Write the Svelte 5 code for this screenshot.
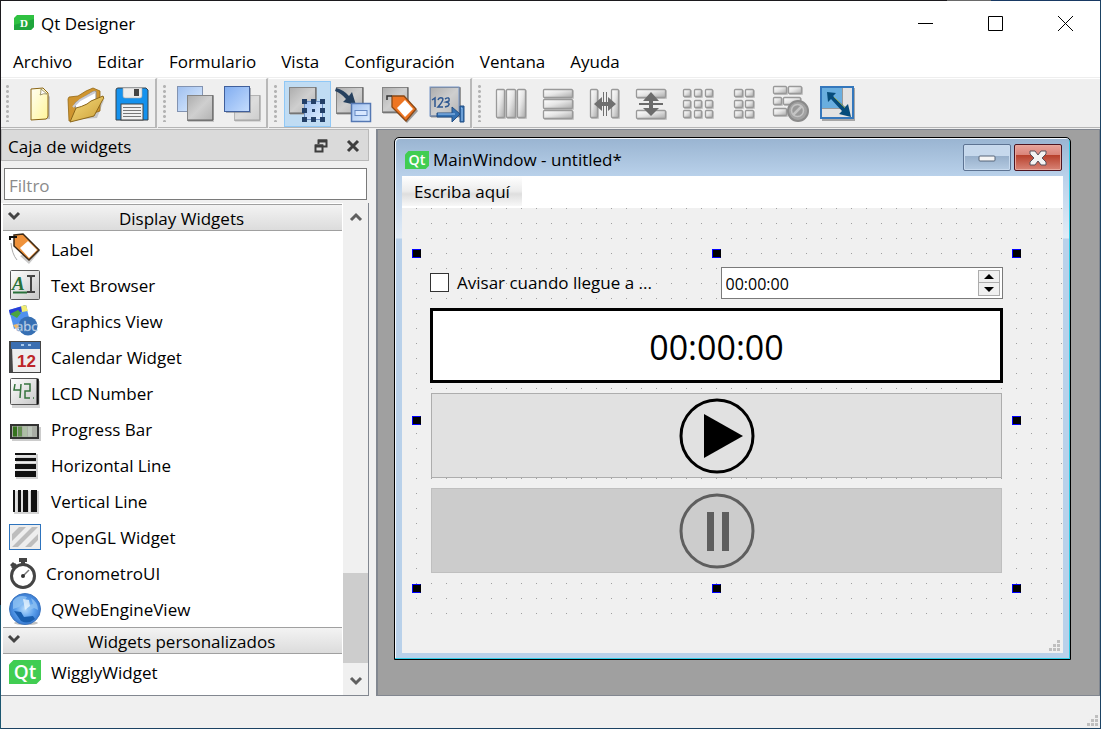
<script>
  const menus = ['Archivo', 'Editar', 'Formulario', 'Vista', 'Configuración', 'Ventana', 'Ayuda'];

  const toolbars = [
    [
      { icon: 'new', label: 'Nuevo' },
      { icon: 'open', label: 'Abrir' },
      { icon: 'save', label: 'Guardar' },
    ],
    [
      { icon: 'lower', label: 'Enviar atrás' },
      { icon: 'raise', label: 'Traer al frente' },
    ],
    [
      { icon: 'edit-widgets', label: 'Editar widgets', active: true },
      { icon: 'edit-signals', label: 'Editar señales y slots' },
      { icon: 'edit-buddies', label: 'Editar compañeros' },
      { icon: 'edit-tabs', label: 'Editar orden de tabulación' },
    ],
    [
      { icon: 'lay-h', label: 'Distribuir horizontalmente' },
      { icon: 'lay-v', label: 'Distribuir verticalmente' },
      { icon: 'split-h', label: 'Divisor horizontal' },
      { icon: 'split-v', label: 'Divisor vertical' },
      { icon: 'grid', label: 'Distribuir en rejilla' },
      { icon: 'form', label: 'Distribuir en formulario' },
      { icon: 'break', label: 'Romper distribución' },
      { icon: 'adjust', label: 'Ajustar tamaño' },
    ],
  ];

  const displayWidgets = [
    { icon: 'label', name: 'Label' },
    { icon: 'text', name: 'Text Browser' },
    { icon: 'graphics', name: 'Graphics View' },
    { icon: 'calendar', name: 'Calendar Widget' },
    { icon: 'lcd', name: 'LCD Number' },
    { icon: 'progress', name: 'Progress Bar' },
    { icon: 'hline', name: 'Horizontal Line' },
    { icon: 'vline', name: 'Vertical Line' },
    { icon: 'opengl', name: 'OpenGL Widget' },
    { icon: 'chrono', name: 'CronometroUI', narrow: true },
    { icon: 'web', name: 'QWebEngineView' },
  ];
  const groups = [
    { title: 'Display Widgets', items: displayWidgets },
    { title: 'Widgets personalizados', items: [{ icon: 'qt', name: 'WigglyWidget' }] },
  ];

  const handles = ['nw', 'n', 'ne', 'w', 'e', 'sw', 's', 'se'];

  let filter = $state('');
  let time = $state('00:00:00');
  let warn = $state(false);
</script>

{#snippet cell(x, y, w, h)}
  <rect x={x + 1} y={y + 1} width={w} height={h} rx="1" fill="#c4c4c4" />
  <rect x={x + 0.5} y={y + 0.5} width={w - 1} height={h - 1} rx="1" fill="url(#g-cell)" stroke="#999" stroke-width="1.300" />
{/snippet}

{#snippet pane(x, y, s)}
  <rect x={x + 1} y={y + 1} width={s} height={s} fill="#999" opacity=".5" />
  <rect x={x + 0.5} y={y + 0.5} width={s - 1} height={s - 1} fill="url(#g-pane)" stroke="#858585" />
  <path d="M{x + 1} {y + s - 1}h{s - 1}v-{s - 1}" fill="none" stroke="#666" />
{/snippet}

{#snippet qtlogo()}
  <path d="M4.500 4H32V23.500L27.500 28H0V8.500z" fill="#41cd52" />
  <text x="16" y="22.500" text-anchor="middle" font-size="19" font-weight="600" fill="#fff">Qt</text>
{/snippet}

{#snippet icon(name)}
  <svg class="icon" viewBox="0 0 32 32" aria-hidden="true">
    {#if name === 'new'}
      <path d="M8 32l19-1V9l-3-4z" fill="#777" opacity=".4" />
      <path d="M8 1l12-1 5 5v23q0 2-2 3L8 32z" fill="url(#g-paper)" stroke="#8a6414" />
      <path d="M18 1q0 5-1 6 4-2 7-1z" fill="#fff" stroke="#8b8056" stroke-width=".8" />
    {:else if name === 'open'}
      <path d="M2 32l26-2 7-18z" fill="#777" opacity=".35" />
      <path d="M-1 11l1-2 9-1 8-5 7-3 7 3v20L0 33z" fill="#cf9530" stroke="#946711" stroke-width=".8" />
      <path d="M6 15l6-4 11-7 4-1v11L7 25z" fill="#fff" stroke="#8c8c8c" />
      <path d="M4 19l7-7 15-8" fill="none" stroke="#c9cbd5" stroke-width="2" />
      <path d="M7 20q5-1 11-4l4-3 12-5q2 2-1 5L25 28 1 34z" fill="url(#g-folder)" stroke="#8b6518" />
    {:else if name === 'save'}
      <path d="M2 0h28l2 2v30H0V2q0-2 2-2z" fill="#1592ee" stroke="#3b4249" />
      <path d="M7 0h19v8q0 2-2 2H9q-2 0-2-2z" fill="#ececec" stroke="#aaa" stroke-width=".6" />
      <rect x="18" y="1" width="5" height="7" fill="#444" />
      <rect x="5" y="16" width="22" height="16" fill="#f1f1f1" stroke="#444" />
      <path d="M7 19.500h18M7 22.500h18M7 25.500h18M7 28.500h18" stroke="#777" />
    {:else if name === 'lower'}
      <rect x="-2.500" y="-1.500" width="25" height="25" fill="url(#g-sky)" stroke="#8293b1" />
      {@render pane(7, 7, 26)}
    {:else if name === 'raise'}
      <g opacity=".55">{@render pane(7, 7, 26)}</g>
      <rect x="-1" y="0" width="25" height="25" fill="#7b818b" opacity=".6" />
      <rect x="-2.500" y="-1.500" width="25" height="25" fill="url(#g-blue)" stroke="#405f9b" />
    {:else if name === 'edit-widgets'}
      {@render pane(-2, -1, 27)}
      <rect x="13.500" y="13.500" width="18" height="18" fill="url(#g-sky)" stroke="#6e90c4" />
      <path d="M11 11h5v5h-5zM20 11h5v5h-5zM29 11h5v5h-5zM11 20h5v5h-5zM29 20h5v5h-5zM11 29h5v5h-5zM20 29h5v5h-5zM29 29h5v5h-5zM21 21h3v3h-3z" fill="#233f67" />
    {:else if name === 'edit-signals'}
      {@render pane(-2, -1, 27)}
      <path d="M-2 0q8 2 13 8l3-4 4 13-13-3 3-3Q3 5-3 3z" fill="#26405e" />
      <rect x="13.500" y="15.500" width="19" height="18" fill="url(#g-sky)" stroke="#5578b3" stroke-width="1.500" />
      <rect x="17" y="22.500" width="12" height="5" fill="#d7e7ff" stroke="#678ac3" />
    {:else if name === 'edit-buddies'}
      {@render pane(-2, -1, 26)}
      <path d="M12 24L23 35 34 23 30 18z" fill="#444" opacity=".5" />
      <path d="M8 8h12l12 13-10 12L8 19z" fill="#ee7522" stroke="#8a4815" stroke-width="1.300" />
      <path d="M13 20l8-8 8 9-8 8z" fill="#fff" />
      <path d="M3 12V8h5" fill="none" stroke="#333" stroke-width="1.500" />
    {:else if name === 'edit-tabs'}
      {@render pane(-1, -1, 30)}
      <rect x="-1" y="-1" width="29" height="29" fill="none" stroke="#7696c8" />
      <path d="M1 12l3-2v9M7 12q1-3 4-2t-4 9h5M14 11q5-3 4 2l-3 1q5 1 2 4l-3 1" stroke="#2e5790" stroke-width="1.500" fill="none" />
      <path d="M6 25h15v-6l8 7-8 8v-5H6zM29 18h4v16h-4z" fill="#3471b2" stroke="#234f83" />
      <path d="M7 26h17M30 20h1v13" stroke="#a2cdfa" fill="none" />
    {:else if name === 'lay-h'}
      {@render cell(1, 1, 9, 29)}{@render cell(11, 1, 10, 29)}{@render cell(22, 1, 9, 29)}
    {:else if name === 'lay-v'}
      {@render cell(1, 1, 30, 9)}{@render cell(1, 11, 30, 10)}{@render cell(1, 22, 30, 9)}
    {:else if name === 'split-h'}
      {@render cell(1, 1, 8, 29)}{@render cell(22, 1, 8, 29)}
      <path d="M5 16l8-7v5h1V4h1v10h2V4h1v10h1V9l8 7-8 7v-5h-1v10h-1V18h-2v10h-1V18h-1v5z" fill="#707070" />
    {:else if name === 'split-v'}
      {@render cell(1, 1, 30, 9)}{@render cell(1, 22, 30, 9)}
      <path d="M16 4l8 9h-6v2h10v2H18v3h6l-8 8-8-8h6v-3H4v-2h10v-2H8z" fill="#6c6c6c" />
    {:else if name === 'grid'}
      {#each [1, 12, 22] as y}{#each [1, 12, 23] as x}{@render cell(x, y, 8, 8)}{/each}{/each}
    {:else if name === 'form'}
      {#each [1, 12, 22] as y}{#each [6, 17] as x}{@render cell(x, y, 9, 8)}{/each}{/each}
    {:else if name === 'break'}
      {@render cell(-2, -2, 14, 8)}{@render cell(13, -2, 14, 8)}{@render cell(-2, 9, 9, 8)}{@render cell(8, 9, 18, 8)}{@render cell(-2, 20, 14, 8)}
      <circle cx="23" cy="23" r="10" fill="#a3a3a3" stroke="#8a8a8a" stroke-width="2" />
      <circle cx="22.500" cy="22.500" r="6" fill="#999" stroke="#c4c4c4" stroke-width="1.500" />
      <path d="M18 27l9-9" stroke="#c4c4c4" stroke-width="2.500" />
    {:else if name === 'adjust'}
      <rect x="0" y="0" width="33" height="33" fill="#888" opacity=".7" />
      <rect x="-1" y="-1" width="32" height="31" fill="#e2e2e2" stroke="#3477bc" stroke-width="2" />
      <rect x="0" y="0" width="20" height="20" fill="#69aedf" />
      <path d="M0 20.500h20.500V0" fill="none" stroke="#999" />
      <path d="M5 4l9 1-3 3 12 11 3-3 3 13-12-3 3-3L9 11l-3 3z" fill="#064c7b" />
      <path d="M12 9l11 11" stroke="#a8b94a" stroke-width=".8" />
    {:else if name === 'label'}
      <path d="M11 23L20 31l11-13-3-4z" fill="#777" opacity=".4" />
      <path d="M5 2L14 1l16 16-10 10L5 13z" fill="#ef923b" stroke="#3c2a17" stroke-width="1.500" />
      <path d="M11 15l8-7 9 9-8 8z" fill="#fff" />
      <path d="M1 7V4h7" fill="none" stroke="#111" stroke-width="2" />
      <path d="M2 10q1 11 6 17" fill="none" stroke="#aaa" />
    {:else if name === 'text'}
      <rect x="1.500" y="1.500" width="29" height="29" rx="1" fill="url(#g-tile)" stroke="#555" />
      <text x="3" y="21" font-size="19" font-style="italic" font-weight="600" fill="#28713a" class="serif">A</text>
      <path d="M4 23.500h14" stroke="#28713a" stroke-width="2" />
      <path d="M18 7h3l1 1 1-1h3M22 8v14M18 23h3l1-1 1 1h3" stroke="#444" stroke-width="2" fill="none" />
    {:else if name === 'graphics'}
      <path d="M0 5l17-5 4 17-16 7z" fill="#5091ed" />
      <path d="M0 5l17-5 1 5L1 10z" fill="#293fd8" />
      <path d="M12 1l5-1 2 6-6 1z" fill="#f1ed75" />
      <path d="M1 9l8-4 3 3-4 5z" fill="#4ba53e" />
      <path d="M4 20l8-2 2 5-7 1z" fill="#edbb66" />
      <circle cx="19" cy="21" r="9.500" fill="#366fb3" />
      <text x="7" y="26" font-size="13" fill="#eff7ff" stroke="#83a6cf" stroke-width=".5">abc</text>
    {:else if name === 'calendar'}
      <path d="M0 0h32v32H0z" fill="#454545" />
      <path d="M3 6h28v25H4z" fill="#eee" />
      <path d="M2 1h29v7H2z" fill="#3c6fb1" />
      <path d="M12 4h3M19 4h3" stroke="#a5c7eb" stroke-width="2" />
      <text x="17.500" y="26" text-anchor="middle" font-size="17" font-weight="700" fill="#bd2528" class="arial">12</text>
    {:else if name === 'lcd'}
      <rect x="3" y="4" width="28" height="27" fill="#888" opacity=".35" />
      <rect x="1.500" y="1.500" width="28" height="26" rx="1" fill="url(#g-tile)" stroke="#555" />
      <path d="M28.500 2v25.500" stroke="#111" stroke-width="2" />
      <path d="M6 7l-1 6h7M12 7l-1 14M15 7h6v7h-5v7h5M24 21h1" fill="none" stroke="#35733d" stroke-width="1.500" />
    {:else if name === 'progress'}
      <rect x="3" y="14" width="29" height="14" fill="#999" opacity=".5" />
      <rect x="2" y="12" width="27" height="13" fill="#a9ada5" stroke="#333" stroke-width="2" />
      <path d="M4 13.500h4v10H4z" fill="#35721e" /><path d="M9 13.500h4v10H9z" fill="#649051" /><path d="M14 13.500h4v10h-4z" fill="#adbea5" /><path d="M19 13.500h4v10h-4z" fill="#bdc7bb" />
    {:else if name === 'hline'}
      <path d="M7 5h22v25H7z" fill="#b6b6b6" opacity=".6" />
      <path d="M6 4h21v2H6zM6 9h21v3H6zM6 15h21v5H6zM6 22h21v6H6z" fill="#111" />
      <path d="M6 7h21M6 13.500h21M6 21h21" stroke="#eee" />
    {:else if name === 'vline'}
      <path d="M5 6h25v23H5z" fill="#b6b6b6" opacity=".6" />
      <path d="M4 5h2v22H4zM9 5h3v22H9zM14 5h5v22h-5zM22 5h6v22h-6z" fill="#111" />
      <path d="M7 5v22M13 5v22M20.500 5v22" stroke="#eee" />
    {:else if name === 'opengl'}
      <rect x=".500" y="3.500" width="31" height="25" fill="#eee" stroke="#2d73bd" />
      <path d="M3 13l7-7h7L3 20zM3 26l20-20h6L9 26zM16 26l13-13v6l-7 7z" fill="#bdbdbd" />
    {:else if name === 'chrono'}
      <circle cx="14" cy="19" r="11.500" fill="none" stroke="#444" stroke-width="3" />
      <path d="M10 1h8v4h-8zM12 4h4v4h-4zM2 10l4-4 2 2-4 4zM1 8l3-3 2 2-3 3z" fill="#444" />
      <path d="M13 20l7-7" stroke="#777" stroke-width="1.500" /><circle cx="14" cy="19" r="2" fill="#333" />
    {:else if name === 'web'}
      <ellipse cx="17" cy="30" rx="12" ry="2" fill="#999" opacity=".6" />
      <circle cx="16" cy="16" r="15.500" fill="url(#g-globe)" stroke="#3e77c0" />
      <path d="M4 8q5-7 14-4l-3 5-5 5-6 2zM22 5q7 4 7 12l-4-2-6 3-2-5 7-2z" fill="#8fc2f2" opacity=".8" />
      <path d="M5 18l7 1 3 5 9-1 2 3q-7 6-14 2z" fill="#195eae" />
      <path d="M14 6l6 1 1 6-5 4z" fill="#f5fcff" opacity=".7" />
    {:else if name === 'qt'}
      {@render qtlogo()}
    {/if}
  </svg>
{/snippet}

{#snippet chevron(up)}
  <svg class="chev" viewBox="0 0 14 10" aria-hidden="true">
    <path d={up ? 'M2 8l5-5 5 5' : 'M2 2l5 5 5-5'} fill="none" stroke="currentColor" stroke-width="3" />
  </svg>
{/snippet}

<svg class="defs" aria-hidden="true">
  <defs>
    <linearGradient id="g-cell" x2="1" y2="1"><stop stop-color="#fff" /><stop offset=".45" stop-color="#e6e6e6" /><stop offset="1" stop-color="#aaa" /></linearGradient>
    <linearGradient id="g-pane" x2="1" y2="1"><stop stop-color="#adadad" /><stop offset=".5" stop-color="#cfcfcf" /><stop offset="1" stop-color="#b2b2b2" /></linearGradient>
    <linearGradient id="g-sky" x2="1" y2="1"><stop stop-color="#9fbfef" /><stop offset="1" stop-color="#dfeeff" /></linearGradient>
    <linearGradient id="g-blue" x2="1" y2="1"><stop stop-color="#81adf0" /><stop offset="1" stop-color="#c4dcfd" /></linearGradient>
    <linearGradient id="g-paper" x2="1" y2="1"><stop stop-color="#fffef3" /><stop offset="1" stop-color="#fff599" /></linearGradient>
    <linearGradient id="g-folder" x2="1" y2="1"><stop stop-color="#f5dc80" /><stop offset="1" stop-color="#cd9f35" /></linearGradient>
    <linearGradient id="g-tile" x2="1" y2="1"><stop stop-color="#fff" /><stop offset="1" stop-color="#c6c6c6" /></linearGradient>
    <radialGradient id="g-globe"><stop stop-color="#b8dcfb" /><stop offset=".6" stop-color="#5ca0ec" /><stop offset="1" stop-color="#397bd2" /></radialGradient>
  </defs>
</svg>

<div class="window">
  <header class="titlebar">
    <svg class="app-icon" viewBox="0 0 20 15" aria-hidden="true">
      <path d="M3 0h17v12l-3 3H0V3z" fill="#2fc141" /><path d="M0 10L20 4v8l-3 3H0z" fill="#17963a" opacity=".65" />
      <text x="10" y="11.500" text-anchor="middle" font-size="11" font-weight="700" fill="#fff" class="serif">D</text>
    </svg>
    <span class="app-title">Qt Designer</span>
    <button class="sys" aria-label="Minimizar"><svg viewBox="0 0 15 15"><path d="M0 7.500h15" /></svg></button>
    <button class="sys" aria-label="Maximizar"><svg viewBox="0 0 15 15"><path d="M.500 .500h14v14H.500z" /></svg></button>
    <button class="sys" aria-label="Cerrar"><svg viewBox="0 0 15 15"><path d="M0 0l15 15M15 0L0 15" /></svg></button>
  </header>

  <nav class="menubar">
    {#each menus as menu}<button>{menu}</button>{/each}
  </nav>

  <div class="toolbars">
    {#each toolbars as tools}
      <div class="toolbar" role="toolbar">
        <span class="grip"></span>
        <div class="tools">
          {#each tools as tool}
            <button class="tool" class:active={tool.active} aria-label={tool.label}>{@render icon(tool.icon)}</button>
          {/each}
        </div>
      </div>
    {/each}
  </div>

  <main class="workspace">
    <aside class="dock">
      <div class="dock-title">
        <span>Caja de widgets</span>
        <button aria-label="Flotar">
          <svg viewBox="0 0 14 14"><path d="M4.500 5V1.500h8v6H9" /><path d="M4 2h9" stroke-width="3" /><path d="M1.500 6.500h7v6h-7z" /><path d="M1 7h8" stroke-width="3" /></svg>
        </button>
        <button aria-label="Cerrar panel">
          <svg viewBox="0 0 14 14"><path d="M2 2l10 10M12 2L2 12" stroke-width="3" /></svg>
        </button>
      </div>
      <input class="filter" type="text" placeholder="Filtro" aria-label="Filtro" bind:value={filter} />
      <div class="box">
        <div class="list">
          {#each groups as group}
            <button class="group">{@render chevron(false)}<span>{group.title}</span></button>
            <ul>
              {#each group.items as item}
                <li class:narrow={item.narrow}>{@render icon(item.icon)}<span>{item.name}</span></li>
              {/each}
            </ul>
          {/each}
        </div>
        <div class="scrollbar">
          <button aria-label="Subir">{@render chevron(true)}</button>
          <div class="track"><div class="thumb"></div></div>
          <button aria-label="Bajar">{@render chevron(false)}</button>
        </div>
      </div>
    </aside>

    <section class="mdi">
      <div class="sub">
        <div class="sub-title">
          <svg class="qt" viewBox="0 4 32 24" aria-hidden="true">{@render qtlogo()}</svg>
          <span>MainWindow - untitled*</span>
          <button class="cap min" aria-label="Minimizar formulario">
            <svg viewBox="0 0 18 18"><rect x="1" y="7" width="16" height="5" rx="1" fill="#f5f5f5" stroke="#566579" /></svg>
          </button>
          <button class="cap close" aria-label="Cerrar formulario">
            <svg viewBox="0 0 18 18"><path d="M1 2h5l3 4 3-4h5v3l-4 4 4 4v3h-5l-3-4-3 4H1v-3l4-4-4-4z" fill="#f3f3f3" stroke="#59505a" /></svg>
          </button>
        </div>
        <div class="sub-body">
          <div class="form-menu"><button>Escriba aquí</button></div>
          <div class="canvas">
            <div class="layout">
              {#each handles as h}<i class="handle {h}"></i>{/each}
              <div class="row">
                <label><input type="checkbox" bind:checked={warn} />Avisar cuando llegue a ...</label>
                <div class="spin">
                  <input type="text" aria-label="Tiempo de aviso" bind:value={time} />
                  <div class="steps">
                    <button aria-label="Aumentar"><svg viewBox="0 0 10 5"><path d="M5 0l5 5H0z" /></svg></button>
                    <button aria-label="Disminuir"><svg viewBox="0 0 10 5"><path d="M0 0h10L5 5z" /></svg></button>
                  </div>
                </div>
              </div>
              <div class="clock">00:00:00</div>
              <button class="big" aria-label="Iniciar">
                <svg viewBox="0 0 76 76"><circle cx="38" cy="38" r="36" fill="none" stroke="#000" stroke-width="3" /><path d="M25 16l39 22-39 22z" /></svg>
              </button>
              <button class="big" disabled aria-label="Pausar">
                <svg viewBox="0 0 76 76"><circle cx="38" cy="38" r="36" fill="none" stroke="#5e5e5e" stroke-width="3" /><path d="M28 19h7v39h-7zM43 19h7v39h-7z" fill="#5e5e5e" /></svg>
              </button>
            </div>
          </div>
          <div class="form-status"><span class="sizegrip"></span></div>
        </div>
      </div>
    </section>
  </main>

  <footer class="status"><span class="sizegrip"></span></footer>
</div>

<style>
  :global(body) { margin: 0; }
  .defs { position: absolute; width: 0; height: 0; }
  .window, .window * { box-sizing: border-box; }
  .window {
    min-height: 100vh;
    display: flex;
    flex-direction: column;
    padding: 1px;
    background:
      linear-gradient(to right, #1c1a1e 86%, #6a6a6a 86% 90%, #183963 90%) top / 100% 1px no-repeat,
      linear-gradient(to bottom, #1c1a1e 83%, #1b5670 83%) left / 1px 100% no-repeat,
      #1b4263;
    font-family: "Open Sans", "Noto Sans", sans-serif;
    font-size: 17px;
    line-height: 24px;
    color: #000;
  }
  button, input { font: inherit; color: inherit; }
  button { padding: 0; border: 0; background: none; }
  .icon { width: 32px; height: 32px; overflow: visible; flex: none; }
  .serif { font-family: "Liberation Serif", serif; }
  .arial { font-family: "Liberation Sans", sans-serif; }

  .titlebar { display: flex; align-items: center; height: 45px; background: #fff; padding-left: 13px; }
  .app-icon { width: 20px; height: 15px; margin-right: 7px; margin-bottom: 3px; }
  .app-title { flex: 1; }
  .sys { width: 70px; height: 45px; display: grid; place-items: center; }
  .sys svg { width: 15px; height: 15px; fill: none; stroke: #000; }

  .menubar { display: flex; gap: 25px; height: 32px; padding: 0 12px; background: #fff; border-bottom: 1px solid #eee; }
  .toolbars { display: flex; height: 50px; background: #efefef; }
  .toolbar { display: flex; border-right: 2px solid #b8b8b8; border-bottom: 1px solid #b5b5b5; border-top: 1px solid #fff; margin-right: 1px; }
  .toolbar:last-child { flex: 1; border-right: 0; margin-right: 0; }
  .grip { width: 3px; margin: 5px 7px 5px 5px; background: radial-gradient(circle, #b4b4b4 1px, transparent 2px) 0 0 / 3px 5px; }
  .tools { display: grid; grid-auto-flow: column; grid-auto-columns: 1fr; align-items: center; padding-top: 1px; }
  .toolbar:nth-child(1) .tools { width: 139px; }
  .toolbar:nth-child(2) .tools { width: 93px; }
  .toolbar:nth-child(3) .tools { width: 186px; }
  .toolbar:nth-child(4) .tools { width: 373px; }
  .tool { height: 46px; display: grid; place-items: center; }
  .tool.active { background: #c0dcf3; border: 1px solid #90c8f6; }

  .workspace { flex: 1; display: flex; gap: 8px; padding-top: 1px; background: #f0f0f0; }
  .dock { width: 368px; flex: none; display: flex; flex-direction: column; }
  .dock-title { display: flex; align-items: center; gap: 18px; height: 32px; padding: 2px 8px 0 6px; background: #dadada; border: 1px solid #b9b9b9; }
  .dock-title span { flex: 1; padding-top: 2px; }
  .dock-title button { width: 14px; height: 14px; }
  .dock-title svg { display: block; width: 14px; height: 14px; fill: none; stroke: #3d3d3d; stroke-width: 2; }
  .filter { height: 32px; margin: 7px 2px 3px 3px; padding: 2px 4px 0; border: 1px solid #7a7a7a; background: #fff; outline: 0; }
  .filter::placeholder { color: #8b8b8b; opacity: 1; }
  .box { flex: 1; display: flex; background: #fff; border: 1px solid #828790; border-width: 0 1px 1px 0; }
  .list { flex: 1; padding: 1px 1px 0 2px; }
  .group { display: flex; align-items: center; width: 100%; height: 27px; padding-left: 4px; background: linear-gradient(#f3f3f3, #dcdcdc); border-top: 1px solid #a0a0a0; border-bottom: 1px solid #a0a0a0; }
  .group span { flex: 1; text-align: center; padding-top: 2px; }
  .group .chev { margin-bottom: 4px; }
  .chev { width: 14px; height: 10px; color: #444; }
  ul { list-style: none; margin: 0; padding: 0; }
  li { display: flex; align-items: center; gap: 10px; height: 36px; padding-left: 6px; }
  li span { padding-top: 2px; }
  li.narrow { gap: 5px; }
  .scrollbar { width: 25px; display: flex; flex-direction: column; background: #f0f0f0; }
  .scrollbar button { height: 28px; display: grid; place-items: center; }
  .scrollbar .chev { color: #606060; }
  .track { flex: 1; display: flex; flex-direction: column; justify-content: flex-end; }
  .thumb { height: 90px; background: #cdcdcd; margin-bottom: 4px; }

  .mdi { flex: 1; display: flex; background: #a0a0a0; border: 1px solid #828790; border-left-width: 2px; margin-left: -1px; padding: 7px 28px 35px 16px; }
  .sub {
    flex: 1;
    display: flex;
    flex-direction: column;
    padding: 0 7px 6px 6px;
    border: 1px solid #000;
    border-radius: 5px 5px 0 0;
    box-shadow: inset -1px -1px #2fcbe5, inset 1px 1px #f4f9ff;
    background: linear-gradient(#99b4d1, #b9d1ea 38px, #e1ebf6 100px, #b9d1ea 101px);
  }
  .sub-title { display: flex; align-items: center; height: 38px; padding: 3px 1px 0 4px; gap: 3px; }
  .sub-title span { flex: 1; padding: 2px 0 0 1px; }
  .qt { width: 24px; height: 18px; margin-top: 3px; }
  .cap { width: 48px; height: 27px; display: grid; place-items: center; border-radius: 2px; margin-bottom: 2px; }
  .cap svg { width: 18px; height: 18px; }
  .min { border: 1px solid #5d7392; background: linear-gradient(#c6d8ec 45%, #98b0cb 45%, #b5cbe2); box-shadow: inset 0 0 0 1px #c8daee; }
  .close { border: 1px solid #4e1420; background: linear-gradient(#e9a39b, #d98277 42%, #b8412d 42%, #d88476); box-shadow: inset 0 0 0 1px #e6a89d; }
  .sub-body { flex: 1; display: flex; flex-direction: column; background: #f0f0f0; margin-left: 1px; }
  .form-menu { height: 32px; background: #fff; }
  .form-menu button { height: 30px; width: 120px; padding-top: 2px; background: linear-gradient(#fff, #ececec 50%, #dedede 60%, #f8f8f8); }
  .canvas {
    flex: 1;
    padding: 45px 46px 0 14px;
    background: conic-gradient(from 90deg at 14px 14px, #a0a0a0 90deg, transparent 0) 0 1px / 15px 15px;
  }
  .layout { position: relative; display: flex; flex-direction: column; gap: 10px; padding: 14px 14px 15px; }
  .handle { position: absolute; width: 9px; height: 9px; background: #000; border: 1px solid #00f; border-right-color: #000; }
  .nw, .n, .ne { top: -4px; }
  .w, .e { top: calc(50% - 5px); }
  .sw, .s, .se { bottom: -5px; }
  .nw, .w, .sw { left: -4px; }
  .n, .s { left: calc(50% - 5px); }
  .ne, .e, .se { right: -4px; }
  .row { display: grid; grid-template-columns: 1fr 1fr; gap: 8px; height: 31px; }
  .row label { display: flex; align-items: center; gap: 8px; }
  .row input[type='checkbox'] { appearance: none; width: 19px; height: 19px; margin: 0 0 2px; border: 1px solid #333; background: #fff; }
  .spin { display: flex; border: 1px solid #7a7a7a; background: #fff; padding: 2px; }
  .spin input { flex: 1; min-width: 0; border: 0; padding: 2px 2px 0; outline: 0; font-size: 16px; }
  .steps { width: 22px; display: grid; grid-template-rows: 1fr 1fr; border: 1px solid #acacac; background: #f0f0f0; }
  .steps button { display: grid; place-items: center; }
  .steps button:first-child { border-bottom: 1px solid #acacac; }
  .steps svg { width: 10px; height: 5px; }
  .clock { height: 75px; display: grid; place-items: center; padding-top: 2px; border: 3px solid #000; background: #fff; font-size: 34px; line-height: 48px; }
  .big { height: 85px; margin: 0 1px; display: grid; place-items: center; border: 1px solid #adadad; background: #e1e1e1; }
  .big:disabled { background: #ccc; border-color: #bfbfbf; }
  .big svg { width: 76px; height: 76px; }
  .form-status { height: 25px; padding: 7px 3px 2px; display: flex; justify-content: flex-end; align-items: end; }
  .status { height: 32px; padding: 2px; background: #f0f0f0; display: flex; justify-content: flex-end; align-items: end; }
  .sizegrip { width: 12px; height: 12px; background: conic-gradient(from 90deg at 1px 1px, #bfbfbf 90deg, transparent 0) 0 0 / 4px 4px; clip-path: polygon(67% 0, 100% 0, 100% 100%, 0 100%, 0 67%, 33% 67%, 33% 33%, 67% 33%); }
</style>
